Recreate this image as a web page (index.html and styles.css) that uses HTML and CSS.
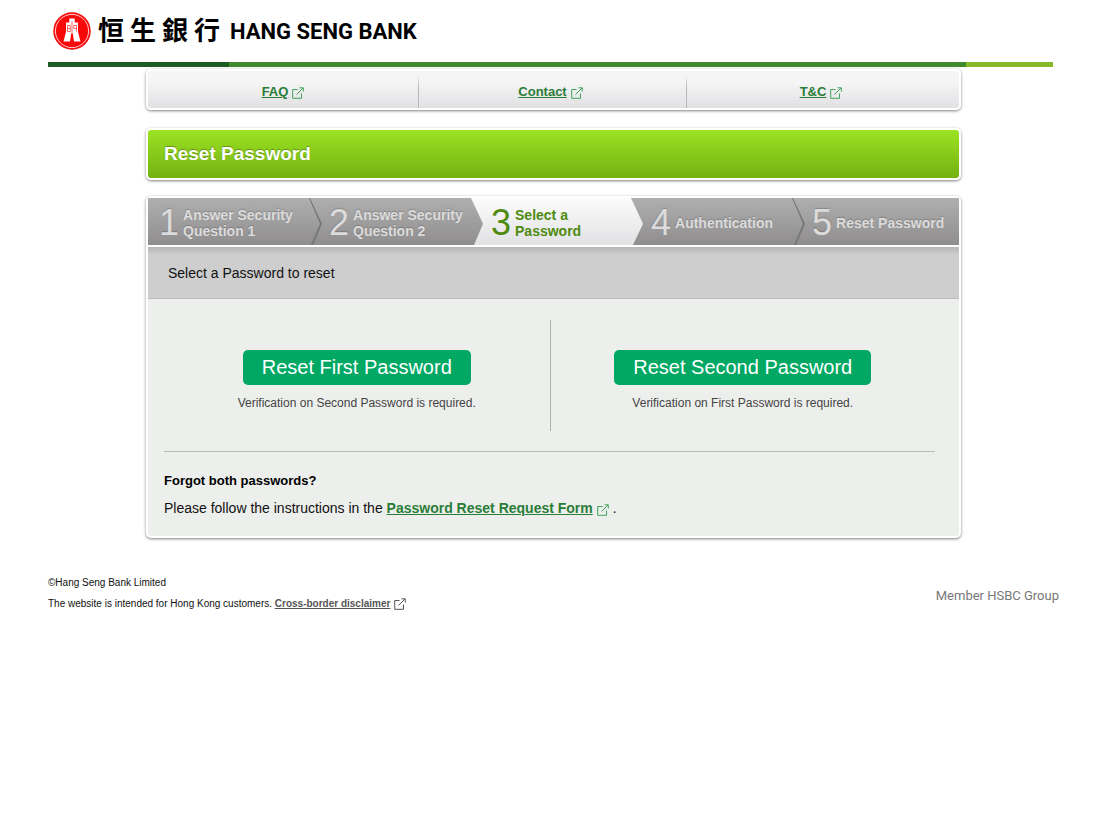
FILE: index.html
```html
<!DOCTYPE html>
<html lang="en">
<head>
<meta charset="utf-8">
<meta name="viewport" content="width=device-width, initial-scale=1">
<title>Reset Password</title>
<link rel="stylesheet" href="styles.css">
</head>
<body>
<svg class="defs" aria-hidden="true">
  <symbol id="external" viewBox="0 0 12 12">
    <path d="M5.500 2.500H.7v8.800h8.800V6.500M4.500 7.500 11 1M7.500 .8h3.800v3.800" fill="none" stroke="currentColor"/>
  </symbol>
</svg>
<div class="page">
  <header class="brand">
    <svg class="emblem" viewBox="0 0 38 38" aria-hidden="true">
      <circle cx="19" cy="19" r="18.700" fill="#f80808"/>
      <circle cx="19" cy="19" r="16.600" fill="none" stroke="#fff" stroke-width=".8"/>
      <path d="M16.300 6.500h5.400v4H25v9.500l2.500 9.500H21l-1.200-8h-1.600l-1.200 8h-6.500L13 20v-9.500h3.300z" fill="#fff"/>
      <path d="M19 9v12.500M14.500 13.500h2.800v6h-2.800zM14.500 16.500h2.800M23.500 19.500v-6h-2.800v3h2.800" fill="none" stroke="#f80808" stroke-width=".6"/>
    </svg>
    <div class="brand-zh" lang="zh-Hant"><span>恒</span><span>生</span><span>銀</span><span>行</span></div>
    <div class="brand-en">HANG SENG BANK</div>
  </header>
  <div class="stripe"></div>
  <main class="content">
    <nav class="card links">
      <div class="link-cell"><a href="#">FAQ</a><svg class="ext"><use href="#external"/></svg></div>
      <div class="link-cell"><a href="#">Contact</a><svg class="ext"><use href="#external"/></svg></div>
      <div class="link-cell"><a href="#">T&amp;C</a><svg class="ext"><use href="#external"/></svg></div>
    </nav>
    <h1 class="card title">Reset Password</h1>
    <section class="card panel">
      <ol class="steps">
        <li class="step step-1"><span class="num">1</span><span>Answer Security<br>Question 1</span></li>
        <li class="step step-2"><span class="num">2</span><span>Answer Security<br>Question 2</span></li>
        <li class="step step-3"><span class="num">3</span><span>Select a<br>Password</span></li>
        <li class="step step-4"><span class="num">4</span><span>Authentication</span></li>
        <li class="step step-5"><span class="num">5</span><span>Reset Password</span></li>
      </ol>
      <p class="lead">Select a Password to reset</p>
      <div class="body">
        <div class="choices">
          <div class="choice"><button class="btn" type="button">Reset First Password</button><p class="note">Verification on Second Password is required.</p></div>
          <div class="choice"><button class="btn" type="button">Reset Second Password</button><p class="note">Verification on First Password is required.</p></div>
        </div>
        <div class="forgot">
          <h2>Forgot both passwords?</h2>
          <p>Please follow the instructions in the <a href="#">Password Reset Request Form</a><svg class="ext"><use href="#external"/></svg>.</p>
        </div>
      </div>
    </section>
  </main>
  <footer class="footer">
    <div class="legal">
      <p>©Hang Seng Bank Limited</p>
      <p>The website is intended for Hong Kong customers. <a href="#">Cross-border disclaimer</a><svg class="ext"><use href="#external"/></svg></p>
    </div>
    <p class="member">Member HSBC Group</p>
  </footer>
</div>
</body>
</html>
```
FILE: styles.css
```css
* { box-sizing: border-box; }
body {
  margin: 0;
  background: #fff;
  color: #111;
  font-family: "Liberation Sans", Arial, sans-serif;
  font-size: 14px;
}
p, h1, h2, ol { margin: 0; padding: 0; }
.defs { position: absolute; width: 0; height: 0; }
.page { padding: 0 47px 0 48px; }

.brand { display: flex; align-items: center; height: 62px; padding-left: 5px; }
.emblem { width: 38px; height: 38px; }
.brand-zh {
  display: flex;
  gap: 6px;
  margin-left: 7px;
  padding-bottom: 4px;
  color: #000;
  font: 700 26px/30px "Noto Sans CJK TC", sans-serif;
}
.brand-en { margin-left: 10px; padding-top: 2px; color: #000; font: 700 22px/30px Roboto, sans-serif; }
.stripe {
  height: 5px;
  background: linear-gradient(90deg, #1d5c22 18%, #408a2d 18% 91.3%, #86ba28 91.3%);
}

.content { margin: 0 92px 0 98px; }
.card {
  border: 2px solid #fff;
  border-radius: 5px;
  box-shadow: 0 1px 3px rgba(0, 0, 0, .5);
}
.links {
  display: grid;
  grid-template-columns: 270fr 268fr 273fr;
  height: 41px;
  margin-top: 2px;
  background: linear-gradient(#f5f5f5 30%, #e1e1e4);
}
.link-cell { display: flex; align-items: center; justify-content: center; gap: 4px; padding-top: 4px; }
.link-cell + .link-cell {
  padding-right: 4px;
  border-left: 1px solid;
  border-image: linear-gradient(transparent 15%, #b8b8b8 40%) 1;
}
a { color: #2a7d37; font-weight: 700; }
.link-cell a { font-size: 13px; }
.ext { width: 12px; height: 12px; color: #3fa45a; }
.link-cell .ext { margin-top: 2px; }

.title {
  height: 52px;
  margin-top: 18px;
  padding-left: 16px;
  background: linear-gradient(#9be323, #74b112);
  color: #fff;
  font-size: 19px;
  line-height: 48px;
  text-shadow: 0 -1px 1px rgba(0, 0, 0, .3);
}

.panel { margin-top: 16px; background: #edefec; }
.steps {
  display: grid;
  grid-template-columns: 163fr 162fr 160fr 161fr 165fr;
  height: 49px;
  border-bottom: 2px solid #fff;
  background: linear-gradient(#b0afaf, #8f8d8e);
  list-style: none;
  color: #dcdcdc;
  font-size: 14px;
  font-weight: 700;
  line-height: 16px;
}
.step {
  position: relative;
  display: flex;
  align-items: center;
  gap: 4px;
  padding: 3px 0 0 11px;
  white-space: nowrap;
  text-shadow: 0 -1px 1px rgba(0, 0, 0, .2);
}
.step-2, .step-3, .step-4, .step-5 { padding-left: 18px; }
.num { font-size: 36px; font-weight: 400; line-height: 36px; }
.step-3 { color: #4f8b10; text-shadow: none; }
.step > span { position: relative; }
.step-3::before {
  content: "";
  position: absolute;
  inset: 0 -10px 0 -2px;
  background: linear-gradient(#fcfcfc, #e2e2e5);
  clip-path: polygon(0 0, calc(100% - 12px) 0, 100% 55%, calc(100% - 10px) 100%, 3px 100%, 12px 55%);
}
.step-1::after, .step-4::after {
  content: "";
  position: absolute;
  inset: 0 -11px 0 auto;
  width: 13px;
  background: #777576;
  clip-path: polygon(0 0, 1px 0, 100% 55%, 4px 100%, 2px 100%, 11px 55%);
}
.lead {
  height: 52px;
  padding: 18px 20px 0;
  border-bottom: 1px solid #bbbdba;
  background: linear-gradient(#b6b6b6, #cecece 8px);
  font-size: 14px;
  line-height: 16px;
}
.body { padding: 21px 24px 19px 16px; }
.choices {
  display: grid;
  grid-template-columns: 1fr 1fr;
  padding-bottom: 20px;
  border-bottom: 1px solid #b9bbb9;
}
.choice { display: flex; flex-direction: column; align-items: center; height: 111px; padding-top: 30px; }
.choice + .choice { border-left: 1px solid #adafad; }
.btn {
  height: 35px;
  padding: 0 19px;
  border: 0;
  border-radius: 5px;
  background: #00a864;
  color: #fff;
  font: 20px/35px "Liberation Sans", Arial, sans-serif;
}
.note { margin-top: 10px; color: #444; font-size: 12px; line-height: 16px; }
.forgot h2 { margin-top: 21px; color: #000; font-size: 13px; line-height: 16px; }
.forgot p { margin-top: 10px; font-size: 14px; line-height: 18px; }
.forgot .ext, .legal .ext { margin: 0 4px; vertical-align: -3px; }

.footer { display: flex; justify-content: space-between; margin: 34px -6px 0 0; }
.legal { font-size: 10px; line-height: 21px; }
.legal a, .legal .ext { color: #555; }
.member { margin-top: 14px; color: #777; font: 13px/20px Roboto, sans-serif; }
```
